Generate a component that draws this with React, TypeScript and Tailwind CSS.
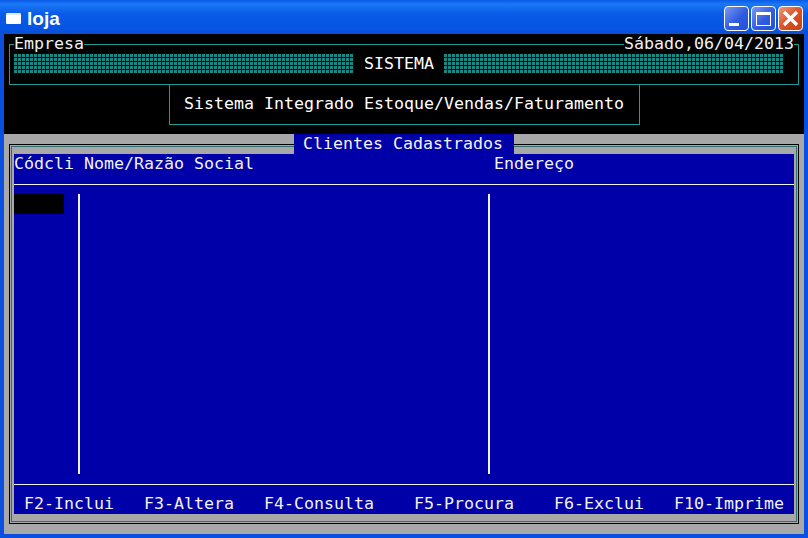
const mono = "font-['DejaVu_Sans_Mono',monospace]"

function Dots({ width }: { width: string }) {
  return (
    <div
      className={`h-[20px] ${width} bg-[linear-gradient(#000_25%,transparent_25%),linear-gradient(90deg,#158a86_75%,transparent_75%)] bg-[length:4px_4px]`}
    />
  )
}

function WindowButton({ kind }: { kind: 'min' | 'max' | 'close' }) {
  const tone =
    kind === 'close'
      ? 'bg-[linear-gradient(135deg,#ea9a80,#dc5228_50%,#c8401a)]'
      : 'bg-[linear-gradient(135deg,#7c9af0,#2f5be0_55%,#2450d8)]'
  return (
    <div className={`w-[25px] h-[25px] rounded-[4px] border border-white flex items-center justify-center ${tone}`}>
      {kind === 'min' && <div className="w-[10px] h-[3px] bg-white self-end mb-[4px] mr-[6px]" />}
      {kind === 'max' && <div className="w-[15px] h-[14px] border border-white border-t-[3px]" />}
      {kind === 'close' && (
        <svg width="19" height="19" viewBox="0 0 19 19">
          <path d="M3 3 L16 16 M16 3 L3 16" stroke="white" strokeWidth="3.2" />
        </svg>
      )}
    </div>
  )
}

const keys = [
  ['F2-Inclui', 'w-[120px]'],
  ['F3-Altera', 'w-[120px]'],
  ['F4-Consulta', 'w-[150px]'],
  ['F5-Procura', 'w-[140px]'],
  ['F6-Exclui', 'w-[120px]'],
  ['F10-Imprime', 'w-[110px]'],
]

export default function App() {
  return (
    <div className={`w-[808px] h-[538px] overflow-hidden flex flex-col bg-[#0a4fe0] text-[16.63px] leading-[20px] text-[#f2f2f2] ${mono}`}>
      {/* title bar */}
      <div className="h-[34px] shrink-0 flex items-center pl-[6px] pr-[5px] pt-[3px] bg-[linear-gradient(#0a5ae6,#1a78f5_12%,#0a5ce8_40%,#0554e2_85%,#0a4fd0)]">
        <div className="w-[15px] h-[11px] bg-white mr-[6px] border-t-[2px] border-[#dfe8ff] rounded-[1px]" />
        <span className="flex-1 font-['Liberation_Sans',sans-serif] font-bold text-[19px] text-white">loja</span>
        <div className="flex gap-[2px]">
          <WindowButton kind="min" />
          <WindowButton kind="max" />
          <WindowButton kind="close" />
        </div>
      </div>

      <div className="mx-[4px] w-[800px] h-[500px] flex flex-col">
        {/* black header */}
        <div className="h-[100px] bg-black relative pt-[10px] px-[5px]">
          <div className="h-[41px] border border-[#1c9c96] flex gap-[10px] pl-[4px] pt-[8px]">
            <Dots width="w-[340px]" />
            <span className="text-white h-[20px] w-[70px] mt-[1px] text-center">SISTEMA</span>
            <Dots width="w-[340px]" />
          </div>
          <div className="w-[471px] h-[41px] ml-[160px] -mt-[1px] border border-[#1c9c96] flex items-center pl-[14px] pb-[2px] text-white">
            Sistema Integrado Estoque/Vendas/Faturamento
          </div>
          <span className="absolute left-[10px] top-0 bg-black">Empresa</span>
          <span className="absolute right-[10px] top-0 bg-black">Sábado,06/04/2013</span>
        </div>

        {/* gray panel */}
        <div className="h-[400px] bg-[#a8a8a8] relative p-[5px] pt-[10px]">
          <div className="h-[380px] border border-black p-[1px]">
            <div className="h-full border border-[#2f6f6f] pt-[7px] px-[2px] pb-[3px]">
              <div className="h-[360px] bg-[#0000a8] flex flex-col">
                <div className="h-[31px] flex border-b border-[#f0f0f0]">
                  <span className="w-[70px]">Códcli</span>
                  <span className="w-[410px]">Nome/Razão Social</span>
                  <span>Endereço</span>
                </div>
                <div className="h-[299px] pt-[9px] flex">
                  <div className="w-[50px] h-[20px] bg-black" />
                  <div className="ml-[14px] w-[2px] h-[280px] bg-[#f0f0f0]" />
                  <div className="ml-[408px] w-[2px] h-[280px] bg-[#f0f0f0]" />
                </div>
                <div className="border-t border-[#f0f0f0] pt-[9px] pl-[10px] flex">
                  {keys.map(([label, w]) => (
                    <span key={label} className={w}>{label}</span>
                  ))}
                </div>
              </div>
            </div>
          </div>
          <span className="absolute left-[290px] top-0 w-[220px] h-[20px] pl-[9px] bg-[#0000a8]">Clientes Cadastrados</span>
        </div>
      </div>
    </div>
  )
}
